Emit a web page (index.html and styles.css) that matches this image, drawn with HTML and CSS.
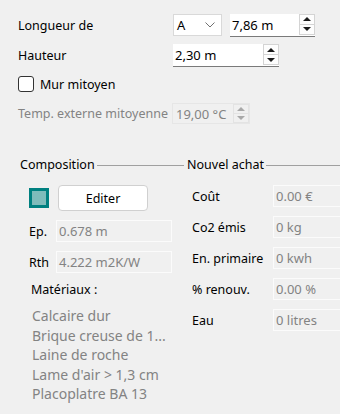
FILE: index.html
```html
<!DOCTYPE html>
<html lang="fr">
<head>
<meta charset="utf-8">
<title>Mur</title>
<link rel="stylesheet" href="styles.css">
</head>
<body>
<div class="page">
  <div class="row r1">
    <span class="lbl">Longueur de</span>
    <div class="combo"><span>A</span>
      <svg class="chev" width="10" height="6" viewBox="0 0 10 6"><path d="M0.5 0.5 L5 5 L9.5 0.5" fill="none" stroke="#707070" stroke-width="1"/></svg>
    </div>
    <div class="spin s1"><span class="val">7,86 m</span>
      <div class="btns"><div class="btn"><i class="up"></i></div><div class="btn"><i class="down"></i></div></div>
    </div>
  </div>
  <div class="row r2">
    <span class="lbl">Hauteur</span>
    <div class="spin s2"><span class="val">2,30 m</span>
      <div class="btns"><div class="btn"><i class="up"></i></div><div class="btn"><i class="down"></i></div></div>
    </div>
  </div>
  <div class="row r3">
    <span class="check"></span><span class="checklbl">Mur mitoyen</span>
  </div>
  <div class="row r4">
    <span class="lbl dis">Temp. externe mitoyenne</span>
    <div class="spin s3 disabled"><span class="val">19,00 °C</span>
      <div class="btns"><div class="btn"><i class="up"></i></div><div class="btn"><i class="down"></i></div></div>
    </div>
  </div>

  <div class="groups">
    <div class="group gleft">
      <div class="gtitle"><span>Composition</span><i class="gline"></i></div>
      <div class="gbody">
        <div class="editrow"><span class="swatch"></span><div class="button">Editer</div></div>
        <div class="frow"><span class="flbl">Ep.</span><div class="field">0.678 m</div></div>
        <div class="frow"><span class="flbl">Rth</span><div class="field">4.222 m2K/W</div></div>
        <div class="mat">Matériaux :</div>
        <ul class="list">
          <li>Calcaire dur</li>
          <li>Brique creuse de 1...</li>
          <li>Laine de roche</li>
          <li>Lame d'air &gt; 1,3 cm</li>
          <li>Placoplatre BA 13</li>
        </ul>
      </div>
    </div>
    <div class="group gright">
      <div class="gtitle"><span>Nouvel achat</span><i class="gline"></i></div>
      <div class="gbody rbody">
        <div class="rrow"><span class="rlbl">Coût</span><div class="field rf">0.00 €</div></div>
        <div class="rrow"><span class="rlbl">Co2 émis</span><div class="field rf">0 kg</div></div>
        <div class="rrow"><span class="rlbl">En. primaire</span><div class="field rf">0 kwh</div></div>
        <div class="rrow"><span class="rlbl">% renouv.</span><div class="field rf">0.00 %</div></div>
        <div class="rrow"><span class="rlbl">Eau</span><div class="field rf">0 litres</div></div>
      </div>
    </div>
  </div>
</div>
</body>
</html>
```
FILE: styles.css
```css
html, body {
  margin: 0;
  padding: 0;
  background: #f0f0f0;
  width: 340px;
  height: 414px;
  overflow: hidden;
}
body {
  font-family: "Noto Sans", "Open Sans", sans-serif;
  font-size: 12.5px;
  color: #000;
}
.page {
  padding-left: 18px;
}
.row {
  display: flex;
  align-items: center;
}
.r1 { margin-top: 13px; height: 24px; }
.r2 { margin-top: 7px; height: 23px; }
.r3 { margin-top: 9px; height: 16px; }
.r4 { margin-top: 11px; height: 21px; }
.lbl {
  width: 155px;
  flex: none;
  white-space: nowrap;
}
.dis { color: #838383; }
.combo {
  box-sizing: border-box;
  width: 49px;
  height: 22px;
  background: #fff;
  border: 1px solid #d9d9d9;
  display: flex;
  align-items: center;
  justify-content: space-between;
  padding: 0 6px 0 3px;
  margin-right: 8px;
  font-size: 13px;
}
.chev { display: block; }
.spin {
  box-sizing: border-box;
  height: 23px;
  background: #fff;
  border-bottom: 1px solid #7a7a7a;
  display: flex;
  align-items: center;
  justify-content: space-between;
  padding-left: 2px;
  font-size: 13px;
}
.s1 { width: 85px; }
.s2 { width: 106px; }
.s3 { width: 78px; height: 21px; margin-left: -1px; }
.btns {
  width: 16px;
  height: 21px;
  display: flex;
  flex-direction: column;
  align-self: flex-start;
}
.btn {
  box-sizing: border-box;
  flex: 1;
  border: 1px solid #d4d4d4;
  background: #fdfdfd;
  display: flex;
  align-items: center;
  justify-content: center;
}
.btn + .btn { border-top: none; }
.up, .down {
  width: 0;
  height: 0;
  border-left: 4px solid transparent;
  border-right: 4px solid transparent;
}
.up { border-bottom: 4px solid #1a1a1a; }
.down { border-top: 4px solid #1a1a1a; }
.disabled {
  background: #f0f0f0;
  border: 1px solid #e6e6e6;
  color: #838383;
  padding-left: 3px;
}
.disabled .btns { height: 19px; }
.disabled .btn { border-color: #e3e3e3; background: #f0f0f0; }
.disabled .up { border-bottom-color: #a8a8a8; }
.disabled .down { border-top-color: #a8a8a8; }
.check {
  box-sizing: border-box;
  width: 16px;
  height: 16px;
  border: 1px solid #333;
  border-radius: 3px;
  background: #fff;
  margin-right: 6px;
}

.groups {
  display: flex;
  margin-top: 33px;
}
.group { display: flex; flex-direction: column; }
.gleft { width: 167px; flex: none; }
.gright { flex: 1; min-width: 0; }
.gtitle {
  display: flex;
  align-items: center;
  height: 16px;
  line-height: 16px;
  padding-left: 2px;
}
.gtitle span { white-space: nowrap; }
.gline {
  flex: 1;
  height: 1px;
  background: #a0a0a0;
  margin-left: 2px;
  margin-right: 1px;
  margin-top: 1px;
}
.gright .gline { margin-right: 0; }
.gbody { padding-left: 11px; }
.editrow {
  display: flex;
  align-items: center;
  margin-top: 12px;
  height: 26px;
}
.swatch {
  box-sizing: border-box;
  width: 20px;
  height: 20px;
  border: 3px solid #008080;
  background: #7fbcbb;
  margin-right: 9px;
}
.button {
  box-sizing: border-box;
  width: 90px;
  height: 26px;
  background: #fff;
  border: 1px solid #d0d0d0;
  border-radius: 4px;
  display: flex;
  align-items: center;
  justify-content: center;
}
.frow {
  display: flex;
  align-items: center;
  margin-top: 9px;
  height: 22px;
}
.flbl { width: 27px; flex: none; }
.field {
  box-sizing: border-box;
  height: 22px;
  border: 1px solid #fbfbfb;
  background: #f0f0f0;
  color: #838383;
  display: flex;
  align-items: center;
  padding-left: 2px;
  font-size: 13px;
  white-space: nowrap;
  flex: none;
}
.frow .field { width: 116px; }
.mat {
  margin-top: 9px;
  margin-left: 2px;
  height: 16px;
  line-height: 16px;
}
.list {
  list-style: none;
  margin: 8px 0 0 3px;
  padding: 0;
  color: #838383;
  font-size: 14px;
  line-height: 19.5px;
}
.rbody { padding-left: 7px; }
.rrow {
  display: flex;
  align-items: center;
  height: 22px;
  margin-top: 9px;
}
.rrow:first-child { margin-top: 12px; }
.rlbl { width: 81px; flex: none; white-space: nowrap; }
.rf { width: 67px; border-right: none; }
```
